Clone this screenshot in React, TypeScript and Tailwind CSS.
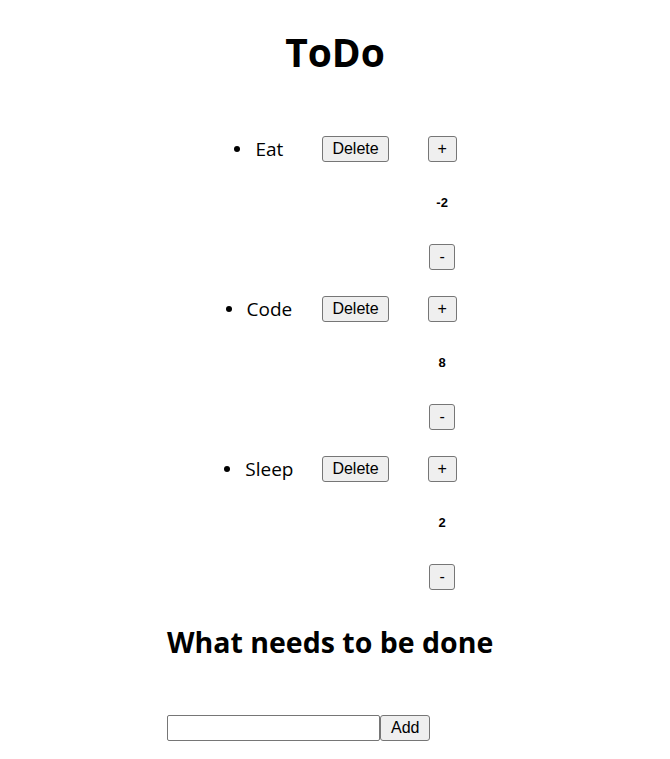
import type { FC } from "react";

type Todo = { id: number; title: string; count: number };

const todos: Todo[] = [
	{ id: 1, title: "Eat", count: -2 },
	{ id: 2, title: "Code", count: 8 },
	{ id: 3, title: "Sleep", count: 2 },
];

const btn =
	"bg-[#efefef] border border-[#767676] rounded-[3px] text-[16px] leading-[18px] py-[3px] font-['Liberation_Sans',Arial,sans-serif] text-black";

const TodoRow: FC<{ todo: Todo }> = ({ todo }) => {
	return (
		<div className="flex flex-row items-start justify-center">
			<ul className="w-[91px]">
				<li className="flex flex-row items-center justify-center text-[19px] leading-[26px]">
					<span className="w-[6px] h-[6px] rounded-full bg-black mr-[15px]" />
					{todo.title}
				</li>
			</ul>
			<button className={`${btn} ml-[18px] px-[9px]`}>Delete</button>
			<div className="ml-[39px] w-[29px] flex flex-col items-center">
				<button className={`${btn} w-[29px]`}>+</button>
				<div className="h-[82px] flex items-center justify-center">
					<h5 className="text-[13px] font-bold font-['Liberation_Sans',Arial,sans-serif]">
						{todo.count}
					</h5>
				</div>
				<button className={`${btn} w-[26px]`}>-</button>
			</div>
		</div>
	);
};

const App: FC = () => {
	return (
		<div className="min-h-[759px] bg-white text-black font-['Open_Sans','Noto_Sans',sans-serif] pt-[26px]">
			<h1 className="text-center text-[39px] font-bold leading-[52px]">ToDo</h1>
			<div className="mt-[58px] flex flex-col gap-[26px]">
				{todos.map((t) => (
					<TodoRow key={t.id} todo={t} />
				))}
			</div>
			<div className="mt-[32px] w-[336px] mx-auto">
				<h2 className="text-[28.5px] font-bold leading-[40px] whitespace-nowrap">
					What needs to be done
				</h2>
				<form className="mt-[53px] flex flex-row" onSubmit={(e) => e.preventDefault()}>
					<input
						type="text"
						className="w-[213px] h-[26px] border border-[#767676] rounded-[2px] px-1"
					/>
					<button className={`${btn} px-[10px]`}>Add</button>
				</form>
			</div>
		</div>
	);
};

export default App;
